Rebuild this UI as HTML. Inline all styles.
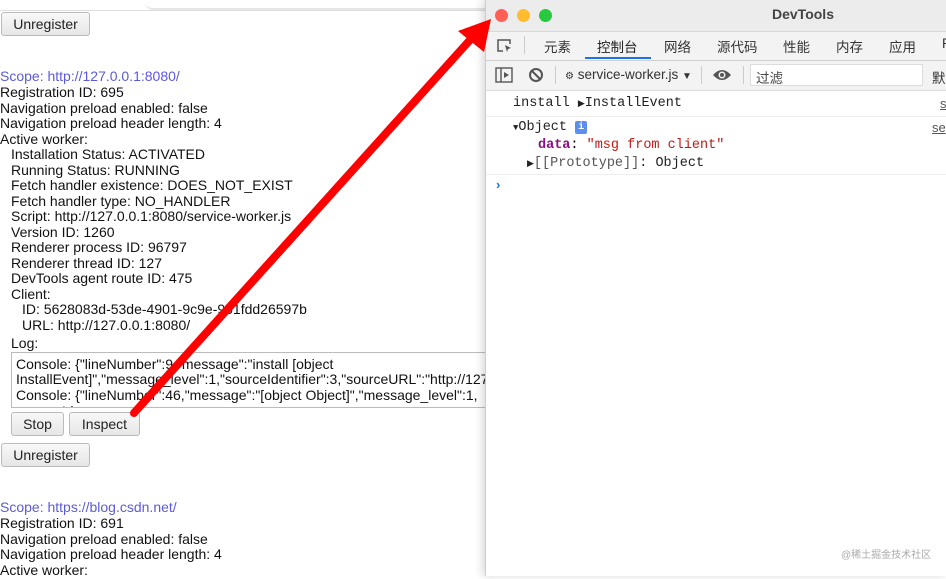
<!DOCTYPE html>
<html><head><meta charset="utf-8"><style>
body{margin:0;width:946px;height:576px;overflow:hidden;background:#fff;position:relative;font-family:"Liberation Sans","Noto Sans CJK SC",sans-serif;}
.l{position:absolute;left:0;font-size:14px;color:#111;white-space:nowrap;line-height:15.5px}
.btn{position:absolute;height:24px;border:1px solid #bbb;border-radius:3px;background:linear-gradient(#f8f8f8,#e6e6e6);font-size:14px;color:#222;line-height:22px;text-align:center;box-sizing:border-box}
.dt{position:absolute;left:485px;top:0;width:461px;height:576px;background:#fff;box-shadow:-3px 0 8px rgba(0,0,0,.15);border-left:1px solid #ccc}
.mono{font-family:"Liberation Mono",monospace;font-size:13.5px;position:absolute;white-space:nowrap}
.tab{position:absolute;top:36px;font-size:13.5px;color:#333}
</style></head><body>
<div style="position:absolute;left:145px;top:0;width:340px;height:8px;border-bottom:2px solid #e6e6e6;border-radius:0 0 0 8px"></div>
<div style="position:absolute;left:0;top:10px;width:485px;border-top:1px solid #ddd"></div>
<div class="btn" style="left:1px;top:12px;width:89px">Unregister</div>
<div class="l" style="top:69px;color:#5b5bd6">Scope: http://127.0.0.1:8080/</div>
<div class="l" style="top:85px">Registration ID: 695</div>
<div class="l" style="top:101px">Navigation preload enabled: false</div>
<div class="l" style="top:116px">Navigation preload header length: 4</div>
<div class="l" style="top:132px">Active worker:</div>
<div class="l" style="top:147px;left:11px">Installation Status: ACTIVATED</div>
<div class="l" style="top:163px;left:11px">Running Status: RUNNING</div>
<div class="l" style="top:178px;left:11px">Fetch handler existence: DOES_NOT_EXIST</div>
<div class="l" style="top:194px;left:11px">Fetch handler type: NO_HANDLER</div>
<div class="l" style="top:209px;left:11px">Script: http://127.0.0.1:8080/service-worker.js</div>
<div class="l" style="top:225px;left:11px">Version ID: 1260</div>
<div class="l" style="top:240px;left:11px">Renderer process ID: 96797</div>
<div class="l" style="top:256px;left:11px">Renderer thread ID: 127</div>
<div class="l" style="top:271px;left:11px">DevTools agent route ID: 475</div>
<div class="l" style="top:287px;left:11px">Client:</div>
<div class="l" style="top:302px;left:22px">ID: 5628083d-53de-4901-9c9e-961fdd26597b</div>
<div class="l" style="top:318px;left:22px">URL: http://127.0.0.1:8080/</div>
<div class="l" style="top:336px;left:11px">Log:</div>
<div style="position:absolute;left:11px;top:352px;width:480px;height:56px;border:1px solid #bbb;overflow:hidden;box-sizing:border-box">
<div class="l" style="left:4px;top:4px">Console: {"lineNumber":9,"message":"install [object</div>
<div class="l" style="left:4px;top:19px">InstallEvent]","message_level":1,"sourceIdentifier":3,"sourceURL":"http://127</div>
<div class="l" style="left:4px;top:35px">Console: {"lineNumber":46,"message":"[object Object]","message_level":1,</div>
<div class="l" style="left:4px;top:51px">,sourceId</div>
</div>
<div class="btn" style="left:11px;top:412px;width:53px">Stop</div>
<div class="btn" style="left:69px;top:412px;width:71px">Inspect</div>
<div class="btn" style="left:1px;top:443px;width:89px">Unregister</div>
<div class="l" style="top:500px;color:#5b5bd6">Scope: https://blog.csdn.net/</div>
<div class="l" style="top:516px">Registration ID: 691</div>
<div class="l" style="top:532px">Navigation preload enabled: false</div>
<div class="l" style="top:547px">Navigation preload header length: 4</div>
<div class="l" style="top:563px">Active worker:</div>

<div class="dt">
<div style="position:absolute;left:0;top:0;width:461px;height:31px;background:#ececec;border-bottom:1px solid #d6d6d6"></div>
<div style="position:absolute;left:9px;top:9px;width:13px;height:13px;border-radius:50%;background:#fe5f57"></div>
<div style="position:absolute;left:31px;top:9px;width:13px;height:13px;border-radius:50%;background:#febc2e"></div>
<div style="position:absolute;left:53px;top:9px;width:13px;height:13px;border-radius:50%;background:#28c840"></div>
<div style="position:absolute;left:286px;top:6px;font-size:14px;font-weight:bold;color:#444">DevTools</div>
<div style="position:absolute;left:0;top:32px;width:461px;height:28px;background:#f3f3f3;border-bottom:1px solid #d0d0d0"></div>
<svg style="position:absolute;left:10px;top:37px" width="18" height="18" viewBox="0 0 18 18"><path d="M7 14H2V3h12v4" fill="none" stroke="#555" stroke-width="1.5"/><path d="M9 8l6 3-3 1-1 3z" fill="#555"/></svg>
<div style="position:absolute;left:38px;top:36px;width:1px;height:18px;background:#ccc"></div>
<div class="tab" style="left:58px">元素</div>
<div class="tab" style="left:111px;color:#222">控制台</div>
<div style="position:absolute;left:99px;top:57px;width:66px;height:2px;background:#1a73e8"></div>
<div class="tab" style="left:178px">网络</div>
<div class="tab" style="left:231px">源代码</div>
<div class="tab" style="left:297px">性能</div>
<div class="tab" style="left:350px">内存</div>
<div class="tab" style="left:403px">应用</div>
<div class="tab" style="left:456px">P</div>
<div style="position:absolute;left:0;top:61px;width:461px;height:29px;background:#f3f3f3;border-bottom:1px solid #ddd"></div>
<svg style="position:absolute;left:9px;top:67px" width="18" height="16"><rect x="1" y="1" width="16" height="14" fill="none" stroke="#555" stroke-width="1.4"/><line x1="6" y1="1" x2="6" y2="15" stroke="#555" stroke-width="1.4"/><path d="M9 5l5 3-5 3z" fill="#555"/></svg>
<svg style="position:absolute;left:42px;top:67px" width="16" height="16"><circle cx="8" cy="8" r="6" fill="none" stroke="#555" stroke-width="2"/><line x1="4" y1="4" x2="12" y2="12" stroke="#555" stroke-width="2"/></svg>
<div style="position:absolute;left:69px;top:66px;width:1px;height:18px;background:#ccc"></div>
<div style="position:absolute;left:79px;top:67px;font-size:13.5px;color:#333"><span style="font-size:10px">⚙</span> service-worker.js <span style="font-size:10px">▼</span></div>
<div style="position:absolute;left:215px;top:66px;width:1px;height:18px;background:#ccc"></div>
<svg style="position:absolute;left:226px;top:68px" width="20" height="14"><path d="M1 7Q10 -3 19 7Q10 17 1 7z" fill="#555"/><circle cx="10" cy="7" r="3.5" fill="#f3f3f3"/><circle cx="10" cy="7" r="2" fill="#555"/></svg>
<div style="position:absolute;left:257px;top:66px;width:1px;height:18px;background:#ccc"></div>
<div style="position:absolute;left:264px;top:64px;width:173px;height:22px;background:#fff;border:1px solid #ddd;box-sizing:border-box;font-size:13.5px;color:#444;padding:2px 5px">过滤</div>
<div style="position:absolute;left:446px;top:67px;font-size:13.5px;color:#333">默</div>
<div class="mono" style="left:27px;top:96px;color:#222">install <span style="font-size:9px">▶</span>InstallEvent</div>
<div style="position:absolute;left:454px;top:96px;font-size:13px;color:#555;text-decoration:underline">s</div>
<div style="position:absolute;left:0;top:116px;width:461px;border-top:1px solid #eee"></div>
<div class="mono" style="left:27px;top:120px;color:#222"><span style="font-size:9px">▼</span>Object <span style="display:inline-block;width:12px;height:13px;background:#5b8ef0;color:#fff;border-radius:2px;font-size:10px;text-align:center;line-height:13px;font-weight:bold;vertical-align:1px">i</span></div>
<div style="position:absolute;left:446px;top:120px;font-size:13px;color:#555;text-decoration:underline">se</div>
<div class="mono" style="left:52px;top:138px"><span style="color:#881280;font-weight:bold">data</span>: <span style="color:#c41a16">"msg from client"</span></div>
<div class="mono" style="left:41px;top:156px;color:#222"><span style="font-size:9px">▶</span><span style="color:#555">[[Prototype]]</span>: Object</div>
<div style="position:absolute;left:0;top:174px;width:461px;border-top:1px solid #eee"></div>
<div style="position:absolute;left:10px;top:177px;font-size:13px;color:#1a73e8;font-weight:bold">›</div>
<div style="position:absolute;left:355px;top:546px;font-size:10px;color:#aaa">@稀土掘金技术社区</div>
</div>

<svg style="position:absolute;left:0;top:0" width="946" height="576">
<line x1="134" y1="413" x2="470" y2="40" stroke="#f00" stroke-width="8" stroke-linecap="round"/>
<polygon points="491,19 458,31 484,52" fill="#f00"/>
</svg>
</body></html>
